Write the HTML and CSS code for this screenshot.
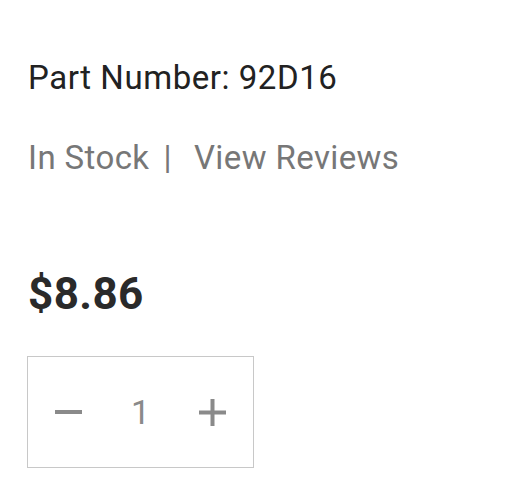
FILE: index.html
```html
<!DOCTYPE html>
<html>
<head>
<meta charset="utf-8">
<link rel="stylesheet" href="styles.css">
</head>
<body>
<div class="product">
  <div class="part">Part Number: 92D16</div>
  <div class="meta"><span>In Stock</span><span class="sep">|</span><span>View Reviews</span></div>
  <div class="price">$8.86</div>
  <div class="qty">
    <button class="btn" aria-label="decrease"><svg width="27" height="6" viewBox="0 0 27 6"><rect x="0" y="1" width="27" height="4" fill="#8a8a8a"/></svg></button>
    <span class="num">1</span>
    <button class="btn" aria-label="increase"><svg width="27" height="27" viewBox="0 0 27 27"><rect x="0" y="11.5" width="27" height="4" fill="#8a8a8a"/><rect x="11.5" y="0" width="4" height="27" fill="#8a8a8a"/></svg></button>
  </div>
</div>
</body>
</html>
```
FILE: styles.css
```css
html, body { margin: 0; padding: 0; background: #fff; }
body { font-family: Roboto, "Noto Sans", sans-serif; }
.product { padding: 58px 0 0 27px; }
.part { padding-left: 1px; font-size: 33px; letter-spacing: 0.55px; color: #222; line-height: 40px; }
.meta { padding-left: 1px; margin-top: 40px; font-size: 33px; letter-spacing: 0.4px; color: #777; line-height: 40px; display: flex; }
.sep { margin: 0 22px 0 14px; }
.price { padding-left: 1px; margin-top: 92px; font-size: 44px; letter-spacing: 0.4px; font-weight: 700; color: #2a2a2a; line-height: 48px; }
.qty { margin-top: 38px; width: 227px; height: 112px; border: 1px solid #c8c8c8; display: flex; align-items: center; justify-content: space-between; padding: 0 27px; box-sizing: border-box; }
.btn { border: 0; background: none; padding: 0; display: flex; align-items: center; }
.num { font-size: 34px; color: #8a8a8a; }
```
